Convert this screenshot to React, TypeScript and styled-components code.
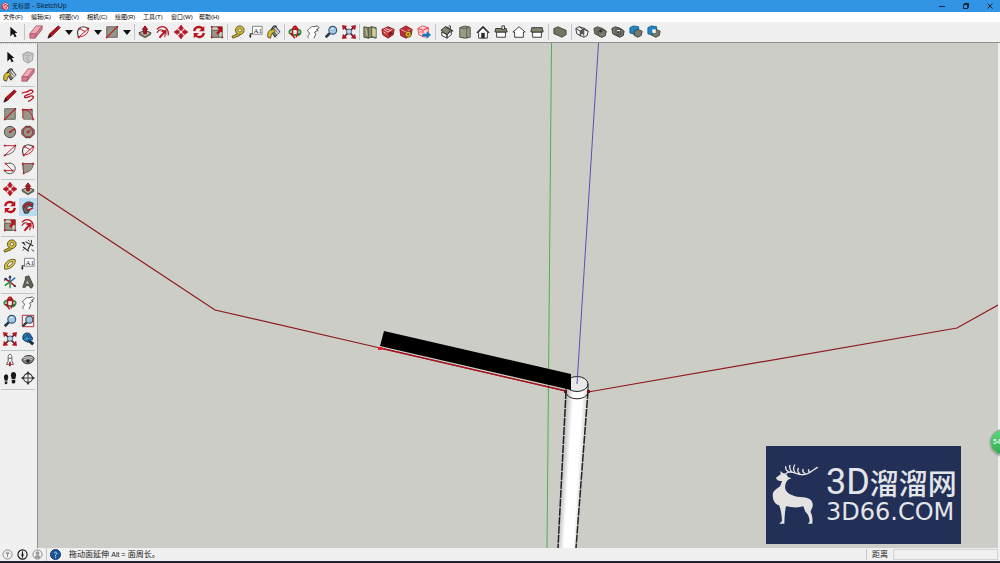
import React from "react";
import styled, { createGlobalStyle } from "styled-components";

const GlobalStyle = createGlobalStyle`
  * { box-sizing: border-box; }
  body { margin: 0; background: #f0f0f0; }
  button, input { font: inherit; color: inherit; margin: 0; padding: 0; border: 0; background: none; }
`;

const ui = `"Liberation Sans", "Noto Sans CJK SC", sans-serif`;

const Window = styled.div`
  display: flex;
  flex-direction: column;
  min-height: 100vh;
  overflow: hidden;
  font: 8px/10px ${ui};
  color: #222;
  background: #f0f0f0;
  border-bottom: 2px solid #20242a;
`;

const TitleBar = styled.header`
  display: flex;
  align-items: center;
  height: 12px;
  padding-left: 1px;
  gap: 3px;
  background: #3294e4;
  color: #0b2540;
`;

const Title = styled.h1`
  flex: 1;
  margin: 0;
  font: 400 6px/12px ${ui};
`;

const AppName = styled.span`
  font-size: 7px;
`;

const WindowButton = styled.button`
  width: 21px;
  height: 12px;
  display: grid;
  place-items: center;
`;

const MenuBar = styled.nav`
  display: flex;
  height: 10px;
  padding-left: 3px;
  background: #fff;
`;

const MenuButton = styled.button`
  width: 28px;
  text-align: left;
  white-space: nowrap;
  font-size: 6px;
  line-height: 10px;
  color: #000;
`;

const Toolbar = styled.div`
  display: flex;
  align-items: center;
  height: 21px;
  padding-left: 4px;
  border-bottom: 1px solid #8f8f8c;
`;

const Tool = styled.button<{ $active?: boolean }>`
  width: 18px;
  height: 18px;
  display: grid;
  place-items: center;
  background: ${(p) => (p.$active ? "#bcdcf4" : "transparent")};
`;

const Caret = styled.button`
  width: 11px;
  height: 18px;
  display: grid;
  place-items: center;
`;

const Divider = styled.i<{ $wide?: number }>`
  width: ${(p) => p.$wide ?? 3}px;
  height: 16px;
  display: flex;
  justify-content: center;
  &::after { content: ""; width: 1px; background: #c2c6c6; }
`;

const Workspace = styled.div`
  flex: 1;
  display: flex;
  min-height: 0;
`;

const SideBar = styled.aside`
  width: 38px;
  padding: 4px 0 0 1px;
  border-right: 1px solid #929290;
  border-top: 1px dotted #c8c8c8;
`;

const ToolGrid = styled.div`
  display: grid;
  grid-template-columns: 18px 18px;
  padding-bottom: 2px;
  border-bottom: 1px solid #c2c6c6;
  margin-right: 2px;
`;

const Viewport = styled.main`
  position: relative;
  flex: 1;
  display: flex;
  margin-right: 2px;
  background: #cdcdc8;
`;

const Scene = styled.svg`
  flex: 1;
  width: 100%;
  min-width: 0;
`;

const Watermark = styled.div`
  position: absolute;
  right: 37px;
  bottom: 4px;
  width: 195px;
  height: 98px;
  display: flex;
  align-items: center;
  padding-left: 6px;
  gap: 8px;
  color: #e4e5e8;
  background: #222f56;
`;

const Brand = styled.div`
  white-space: nowrap;
`;

const BrandName = styled.div`
  display: flex;
  align-items: center;
  height: 34px;
  font: 500 29px/34px "Noto Sans CJK SC", sans-serif;
`;

const BrandLatin = styled.span`
  font: 400 36px/34px Roboto, sans-serif;
`;

const BrandSite = styled.div`
  font: 400 24px/26px "DejaVu Sans", sans-serif;
`;

const FloatBadge = styled.div`
  position: absolute;
  right: -18px;
  top: 386px;
  width: 26px;
  height: 26px;
  padding-left: 2px;
  border-radius: 50%;
  border: 1px solid #7fa989;
  color: #fff;
  font: 400 7px/24px ${ui};
  background: linear-gradient(#62d67c, #2eae4f);
  box-shadow: 0 1px 2px #8a8a86;
`;

const StatusBar = styled.footer`
  display: flex;
  align-items: center;
  height: 13px;
`;

const StatusButton = styled.button`
  width: 15px;
  height: 12px;
  display: grid;
  place-items: center;
`;

const Message = styled.span`
  flex: 1;
  padding-left: 6px;
  white-space: nowrap;
  small { font-size: 7px; }
`;

const MeasureLabel = styled.label`
  display: flex;
  align-items: center;
  gap: 5px;
  padding: 0 2px 0 5px;
  border-left: 1px solid #c8c8c8;
  line-height: 6px;
`;

const Measure = styled.input`
  width: 105px;
  height: 11px;
  border: 1px solid #d0d3d8;
  background: #f0f0f0;
`;

const R = "#b8141f";
const T = "#98978a";
const K = "#2a2a2a";

const solid = (
  <>
    <path d="M1 4l4-2 3 1 3 1 4 3-1 5-4 2-4-2-4-2z" fill="#6e6f62" stroke="#44453c" />
    <path d="M6 7l4-2 5 2-1 5-4 2-4-2z" fill="#7b7c6f" stroke="#44453c" />
  </>
);

const glyphs: Record<string, React.ReactNode> = {
  select: <path d="M5 2v11l3-3 2 4 2-1-2-4h3z" fill="#111" />,
  component: (
    <>
      <path d="M2 5l5-3 7 2-1 8-5 3-5-3z" fill="#ccc" stroke="#999" />
      <path d="M2 5l6 2 6-3M8 7v8M5 4l5 2M5 9l5 3" stroke="#aaa" fill="none" />
    </>
  ),
  eraser: (
    <>
      <path d="M1 10L8 1h7l-7 9z" fill="#f3a9b5" stroke="#a9606e" />
      <path d="M1 10h7l-1 5H1zM8 10l7-9v4l-8 10z" fill="#d9788b" stroke="#a9606e" />
    </>
  ),
  paint: (
    <>
      <path d="M4 6l6-4 5 6-6 6z" fill="#777" stroke={K} />
      <path d="M7 5l6 6M9 3l5 6" stroke="#eee" strokeWidth="1.3" />
      <path d="M1 14c-1-6 2-9 5-9 3 1 4 3 1 4-2 0-2 3-3 6z" fill="#d8bd31" stroke="#4b4417" />
      <path d="M5 6c1-5 4-6 6-4" stroke={K} strokeWidth="1.4" fill="none" />
    </>
  ),
  pencil: (
    <>
      <path d="M1 15l2-5 10-9 2 2-10 10z" fill={R} stroke="#6b0c12" />
      <path d="M1 15l2-5 2 3z" fill="#222" />
    </>
  ),
  freehand: (
    <path d="M1 5c3-3 5 0 8-3 3-2 6 0 4 2-2 3-9 2-9 5 0 2 5 0 7-1 3-1 4 2 2 3-2 2-2 3-5 3" fill="none" stroke={R} strokeWidth="1.5" />
  ),
  rect: (
    <>
      <path d="M2 2h12v12H2z" fill={T} stroke="#5b5b50" />
      <path d="M3 13L13 3" stroke={R} strokeWidth="1.3" />
      <path d="M1 13h2v2H1zM13 1h2v2h-2z" fill={R} />
    </>
  ),
  rotrect: (
    <>
      <path d="M3 3h10v11H3z" fill={T} stroke="#77776b" />
      <path d="M2 13V3h9M3 3q9 1 11 11" stroke={R} fill="none" />
      <path d="M1 2h2v2H1zM11 2h2v2h-2zM13 13h2v2h-2z" fill={R} />
    </>
  ),
  circle: (
    <>
      <circle cx="8" cy="8" r="6.5" fill={T} stroke="#4a4a42" />
      <path d="M8 8l4-3" stroke={R} strokeWidth="1.4" />
      <path d="M7 7h2v2H7zM12 4h2v2h-2z" fill={R} />
    </>
  ),
  polygon: (
    <>
      <path d="M5 1.500h6l4 4v5l-4 4H5l-4-4v-5z" fill={T} stroke={K} />
      <circle cx="8" cy="8" r="5.500" fill="none" stroke={R} />
      <path d="M8 8l4-3M7 7h2v2H7z" stroke={R} />
    </>
  ),
  arc: (
    <>
      <path d="M14 3q1 9-12 11" fill="none" stroke="#555" />
      <path d="M2 14L14 3H2" fill="none" stroke={R} />
      <path d="M1 2h2v2H1zM13 2h2v2h-2zM1 13h2v2H1z" fill={R} />
    </>
  ),
  arc2: (
    <>
      <path d="M3 14C-1 5 6-1 14 4" fill="none" stroke="#444" strokeWidth="1.300" />
      <path d="M3 14L14 4M4 4l7 4M14 4q1 8-11 10" fill="none" stroke={R} />
      <path d="M2 13h2v2H2zM13 3h2v2h-2zM3 3h2v2H3z" fill={R} />
    </>
  ),
  arc3: (
    <>
      <path d="M4 3C12 0 17 8 12 13 8 16 2 14 2 10" fill="none" stroke="#444" />
      <path d="M3 3l8 8H2" fill="none" stroke={R} />
      <path d="M2 2h2v2H2zM10 10h2v2h-2zM1 10h2v2H1z" fill={R} />
    </>
  ),
  pie: (
    <>
      <path d="M2 3h12q0 9-11 11z" fill={T} stroke="#67675b" />
      <path d="M1 2h2v2H1zM13 2h2v2h-2zM2 13h2v2H2z" fill={R} />
      <path d="M3 14L2 3h12" fill="none" stroke={R} strokeWidth=".7" />
    </>
  ),
  push: (
    <>
      <path d="M1 9l7-3 7 3-7 5z" fill="#b5b39d" stroke={K} />
      <path d="M1 9v2l7 4 7-4V9l-7 4z" fill="#68685b" />
      <path d="M8 1l3 4H9.500v5h-3V5H5z" fill={R} stroke="#780c14" />
    </>
  ),
  offset: (
    <>
      <path d="M1 5C6-1 15 2 14 12" fill="none" stroke={R} strokeWidth="1.500" />
      <path d="M1 9c3-6 11-4 9 5" fill="none" stroke="#8d1d24" strokeWidth="1.200" />
      <path d="M3 14l5-6-3-1 7-2v6l-2-2-5 6z" fill={R} />
    </>
  ),
  follow: (
    <>
      <path d="M2 9C2 3 9 0 14 4l-1 4c-4-3-7 0-6 3l3 1-2 3H4z" fill="#69675b" stroke={K} />
      <path d="M4 9c0-4 5-6 9-3M6 11c5 1 6-2 8-2" fill="none" stroke={R} strokeWidth="1.600" />
    </>
  ),
  move: (
    <path d="M8 0l3 4H9.500v2h-3V4H5zM8 16l3-4H9.500v-2h-3v2H5zM0 8l4-3v1.500h2v3H4V11zM16 8l-4-3v1.500h-2v3h2V11z" fill={R} stroke={R} strokeWidth=".6" />
  ),
  rotate: (
    <>
      <path d="M2.500 7C3 2 9 1 12 4M13.500 9c-.5 5-6 6-9.500 3" fill="none" stroke={R} strokeWidth="2.600" />
      <path d="M14 1v6H8zM2 15V9h6z" fill={R} />
    </>
  ),
  scale: (
    <>
      <path d="M2 2h12v12H2z" fill="#d4d1bf" stroke="#4d4d43" />
      <path d="M2 6h8v8H2z" fill={T} stroke="#5c5c50" />
      <path d="M8 2h6v6h-2l-3 3-2-2 3-3z" fill={R} />
      <path d="M1 13h2v2H1zM13 13h2v2h-2zM1 1h2v2H1z" fill={R} />
    </>
  ),
  tape: (
    <>
      <circle cx="10" cy="6" r="5" fill="#d3bb3b" stroke="#564c18" />
      <circle cx="10" cy="6" r="2" fill="#f0eed9" stroke="#6f642b" />
      <path d="M7 10l-6 3 1 2 8-3" fill="#c7af31" stroke="#564c18" />
    </>
  ),
  dimension: (
    <>
      <path d="M2 9l7 5M5 3l9 5M2 4l3 3M8 12l4-8" stroke={K} strokeWidth="1.300" fill="none" />
      <path d="M1 4h3M12 1v3M8 1l2 2M2 13l3-3M12 12l3 2" stroke={K} />
    </>
  ),
  protractor: (
    <>
      <path d="M2 14C0 7 7 1 14 3c1 5-4 11-12 11z" fill="#d8c64a" stroke="#5f581f" />
      <path d="M5 11c0-4 3-6 6-6 0 3-3 6-6 6z" fill="#f0f0f0" stroke="#706724" />
    </>
  ),
  text: (
    <>
      <path d="M4 1.500h11v9H4z" fill="#fff" stroke="#777" />
      <path d="M4 10H1.500v3" fill="none" stroke={K} strokeWidth="1.300" />
      <path d="M0 12h3l-1.500 3z" fill={K} />
      <text x="5" y="9" fontSize="8" fontFamily="Liberation Serif, serif" fill="#222">A1</text>
    </>
  ),
  axes: (
    <>
      <path d="M8 8V1M8 8l6-5" stroke="#2d6fbc" strokeWidth="1.800" />
      <path d="M8 8L2 4M8 8l6 5" stroke={R} strokeWidth="1.800" />
      <path d="M8 8v7M8 8l-6 4" stroke="#2e9b43" strokeWidth="1.800" />
      <path d="M6 3l2-3 2 3zM1 7l1-4 3 1zM12 13l3 1-1-3z" fill="#235" />
    </>
  ),
  text3d: (
    <>
      <path d="M5 2l4-1 5 11-2 3-2-1-1-2H6l-1 2H2l3-9z" fill="#616158" stroke="#45453d" />
      <path d="M7 6l2 4H6z" fill="#c9c9bd" />
    </>
  ),
  orbit: (
    <>
      <ellipse cx="8" cy="8" rx="6.500" ry="3.500" fill="none" stroke="#2a9143" strokeWidth="2.200" />
      <path d="M8 1C4 3 4 13 8 15M8 1c4 2 4 10 1 13" fill="none" stroke={R} strokeWidth="1.800" />
      <path d="M5 5l4-4 2 5zM2 9l3 4 1-4z" fill={R} />
      <path d="M11 9l4 1-3 3z" fill="#217537" />
    </>
  ),
  hand: (
    <path d="M3 15c-2-2 0-3 1-5 0-3-3-2-2-4 3-3 5-5 7-4l4-1 2 2-3 2 2 1-4 2 1 3-2 4" fill="#fff" stroke="#444" />
  ),
  zoom: (
    <>
      <path d="M7 9l-5 5" stroke="#263849" strokeWidth="3" />
      <circle cx="10" cy="6" r="4.500" fill="#9fc7e3" stroke="#36556c" strokeWidth="1.300" />
      <path d="M8 5q1-2 3-1" stroke="#fff" fill="none" />
    </>
  ),
  zoomwin: (
    <>
      <path d="M1.500 1.500h13v13h-13z" fill="none" stroke={R} />
      <path d="M7 9l-5 5" stroke="#263849" strokeWidth="2.600" />
      <circle cx="9.500" cy="6.500" r="4" fill="#9fc7e3" stroke="#36556c" strokeWidth="1.300" />
    </>
  ),
  extents: (
    <>
      <path d="M0 0l6 1-5 5zM16 0l-6 1 5 5zM0 16l6-1-5-5zM16 16l-6-1 5-5z" fill={R} />
      <path d="M3 3l10 10M13 3L3 13" stroke="#6b1b25" strokeWidth="1.800" />
      <circle cx="8" cy="7.500" r="3" fill="#b9d5e8" stroke="#37566c" />
    </>
  ),
  previous: (
    <>
      <path d="M8 9l6 5" stroke="#182f46" strokeWidth="3.500" />
      <circle cx="7" cy="6" r="4.800" fill="#2e78b5" stroke="#173f65" strokeWidth="1.300" />
      <path d="M13 9H8v3L2 8l6-5v3h5z" fill="#3089cd" stroke="#183d5d" />
    </>
  ),
  camera: (
    <>
      <path d="M8 1c3 2 2 6 2 8l2 4H4l2-4c0-3-1-6 2-8z" fill="#fff" stroke="#444" />
      <path d="M7 10h2v5H7z" fill={R} />
      <path d="M6 6h4" stroke="#444" />
    </>
  ),
  look: (
    <>
      <path d="M1 8c2-6 11-7 14-2-1 7-11 9-14 2z" fill="#7d7d79" stroke={K} />
      <path d="M2 6c4-2 9-2 12 0M3 8c3-2 7-2 10 0" fill="none" stroke="#ddd" />
      <circle cx="8" cy="9" r="2" fill="#222" />
    </>
  ),
  walk: (
    <path d="M1 7c0-4 5-5 5 0l-1 4H2zM2 12h3v2c-1 2-3 1-3 0zM9 5c0-5 6-5 6 0l-1 4h-4zM10 10h4v3c-1 2-4 1-4 0z" fill="#181818" />
  ),
  section: (
    <>
      <circle cx="8" cy="8" r="5" fill="none" stroke={K} strokeWidth="1.200" />
      <path d="M8 3v10M3 8h10" stroke={K} />
      <path d="M8 0l2 3H6zM8 16l2-3H6zM0 8l3-2v4zM16 8l-3-2v4z" fill={K} />
    </>
  ),
  map: (
    <>
      <path d="M1 2l5 1 4-1 5 1v12l-5-1-4 1-5-1z" fill="#87916b" stroke="#434a32" />
      <path d="M6 3v12M10 2v12" stroke="#42472f" />
      <path d="M11 4l3 1v8l-3-1zM3 4l2 8" fill="#cfc991" stroke="#d5d0a0" />
    </>
  ),
  warehouse: (
    <>
      <path d="M1 5l7-3 7 3-1 6-6 4-6-4z" fill="#c9343a" stroke="#751b20" />
      <path d="M3 5l5 3 5-3M5 4l6 2M3 8l3 2" fill="none" stroke="#f6dcdc" />
      <path d="M9 9l4-2v3l-4 3z" fill="#721a1e" />
    </>
  ),
  extension: (
    <>
      <path d="M1 5l7-4 7 4-1 6-6 4-6-3z" fill="#c52a30" stroke="#751b20" />
      <path d="M2 5l6 3 5-3" fill="none" stroke="#f3b7b7" />
      <circle cx="10.500" cy="10.500" r="3.500" fill="#dfb530" stroke="#554616" />
      <circle cx="10.500" cy="10.500" r="1.200" fill="#554616" />
    </>
  ),
  share: (
    <>
      <path d="M1 4l5-3 7 2v9l-5 2-6-3z" fill="#fad5d5" stroke="#e83f48" />
      <path d="M1 4l6 2 6-3M3 8h5" fill="none" stroke="#e83f48" strokeWidth="1.300" />
      <path d="M6 10h5V7l5 4-5 5v-3H6z" fill="#1c75bb" />
    </>
  ),
  iso: (
    <>
      <path d="M2 8l6 3v4l-6-3zM8 11l5-4v4l-5 4z" fill="#f7f7f0" stroke={K} />
      <path d="M1 6l5-4 4 1 5 4-3-1-4 5z" fill="#85866f" stroke={K} />
      <path d="M6 2l6 4M10 1h2v3" fill="none" stroke={K} />
    </>
  ),
  top: (
    <>
      <path d="M2 3q5-3 11-1l1 1v11q-6 2-12 0z" fill="#9a9a84" stroke="#4a4a40" />
      <path d="M10 3v12M2 3q4 2 11 0" stroke="#55554a" />
    </>
  ),
  front: (
    <>
      <path d="M3 8v7h10V8L8 3z" fill="#fff" stroke={K} />
      <path d="M1 9l7-7 7 7" fill="none" stroke={K} strokeWidth="1.500" />
      <path d="M6 9h4v6H6z" fill={K} />
    </>
  ),
  right: (
    <>
      <path d="M3 8h10v6H3z" fill="#fff" stroke={K} />
      <path d="M2 4h12l1 4H1z" fill="#85856f" stroke={K} />
      <path d="M9 1h3v4H9z" fill="#eee" stroke={K} />
    </>
  ),
  back: <path d="M1 8l7-6 7 6h-2v6H3V8z" fill="#fff" stroke={K} />,
  left: (
    <>
      <path d="M3 8h10v6H3z" fill="#fff" stroke={K} />
      <path d="M2 3h12l1 5H1z" fill="#85856f" stroke={K} />
    </>
  ),
  shell: <path d="M1 4l5-2 4 2 5 2v5l-5 3-4-2-5-2z" fill="#74755f" stroke="#44453c" />,
  intersect: (
    <>
      <path d="M1 4l4-2 6 2 4 3-1 5-4 2-8-4z" fill="#f4f4f4" stroke={K} />
      <path d="M1 4l5 3 5-3M6 7v6M6 7l4-2 5 2M5 2l5 4v7" fill="none" stroke={K} />
      <path d="M6 7l4-1v4l-4 1z" fill="#55564c" />
    </>
  ),
  union: (
    <>
      {solid}
      <path d="M7 7h4M9 5v4" stroke="#222" />
    </>
  ),
  subtract: (
    <>
      <path d="M1 4l4-2 6 2 4 3-1 5-4 2-8-4z" fill="#77786b" stroke={K} />
      <path d="M6 5h5v6H6z" fill="#fff" stroke={K} />
      <path d="M7 7h3v3H7z" fill="#333" />
    </>
  ),
  trim: (
    <>
      <path d="M1 3l4-2 6 1v6l-4 3-6-2z" fill="#2086c6" stroke="#185d88" />
      <path d="M6 7l4-2 5 2-1 5-4 2-4-2z" fill="#77786b" stroke="#3e3f37" />
    </>
  ),
  split: (
    <>
      <path d="M1 3l4-2 6 1v7l-4 3-6-2z" fill="#2086c6" stroke="#185d88" />
      <path d="M6 7l4-2 5 2-1 5-4 2-4-2z" fill="#77786b" stroke="#3e3f37" />
      <path d="M6 5h4v4H6z" fill="#f4f8fa" />
    </>
  ),
};

function Glyph({ name, size = 14 }: { name: string; size?: number }) {
  return (
    <svg width={size} height={size} viewBox="0 0 16 16" fill="none" aria-hidden="true">
      {glyphs[name]}
    </svg>
  );
}

// "v" places a drop-down caret; a number places a divider of that width.
const topTools: (string | number)[] = [
  "select", 5, "eraser", "pencil", "v", "arc2", "v", "rect", "v", 4,
  "push", "offset", "move", "rotate", "scale", 3,
  "tape", "text", "paint", 3,
  "orbit", "hand", "zoom", "extents", 3,
  "map", "warehouse", "extension", "share", 5,
  "iso", "top", "front", "right", "back", "left", 5,
  "shell", 4, "intersect", "union", "subtract", "trim", "split",
];

const sideTools = [
  ["select", "component", "paint", "eraser"],
  ["pencil", "freehand", "rect", "rotrect", "circle", "polygon", "arc", "arc2", "arc3", "pie"],
  ["move", "push", "rotate", "follow", "scale", "offset"],
  ["tape", "dimension", "protractor", "text", "axes", "text3d"],
  ["orbit", "hand", "zoom", "zoomwin", "extents", "previous"],
  ["camera", "look", "walk", "section"],
];

const menus = ["文件(F)", "编辑(E)", "视图(V)", "相机(C)", "绘图(R)", "工具(T)", "窗口(W)", "帮助(H)"];

function Model() {
  return (
    <Scene viewBox="38 43 960 505" preserveAspectRatio="xMidYMid slice" role="img" aria-label="模型">
      <defs>
        <linearGradient id="tube" gradientUnits="userSpaceOnUse" x1="566" y1="392" x2="588" y2="393.400">
          <stop offset="0" stopColor="#b4b4b4" />
          <stop offset=".35" stopColor="#fff" />
          <stop offset=".75" stopColor="#fff" />
          <stop offset="1" stopColor="#cfcfcf" />
        </linearGradient>
      </defs>
      <path d="M551.500 43L547 548" stroke="#47b34b" />
      <g fill="none" stroke="#8c1a1e" strokeWidth="1.200">
        <path d="M38 193L215 310L380 348L566 391" />
        <path d="M588 392L957 328L998 305" />
      </g>
      <path d="M380 348L566 391" stroke="#a5141f" strokeWidth="1.300" />
      <path d="M566 384L566 392L558 548H576L588 392V384z" fill="url(#tube)" />
      <path d="M566 391L558 548M588 391L576 548" stroke="#222" strokeWidth="1.500" strokeDasharray="8 1" />
      <ellipse cx="577" cy="384" rx="11" ry="7.500" fill="#e8e8e8" stroke="#222" />
      <path d="M566 384v8c1 9 21 9 22 0v-8" fill="none" stroke="#222" />
      <path d="M598.500 43L577 384" stroke="#5552b5" />
      <path d="M384 331L571 374V390L380 346z" fill="#000" />
      <path d="M378 347h4v3h-4z" fill="#e8202b" />
      <path d="M564 390h3v3h-3zM587 390h3v3h-3z" fill="#701016" />
    </Scene>
  );
}

function Deer() {
  return (
    <svg width="46" height="62" viewBox="36 113 138 186" aria-hidden="true">
      <path
        d="M48 154L62 144L61 134L70 141C76 139 82 146 84 152L94 156L84 160C76 168 74 180 76 188C80 200 94 208 112 211C136 212 156 214 158 232C160 244 152 248 152 258C158 270 158 280 157 292H144L149 285C148 272 145 264 136 256L130 240C112 246 92 242 78 240C74 256 74 274 73 292H58L66 284C65 268 64 252 57 237C42 232 36 216 39 200C42 190 54 186 61 178L66 164C58 164 50 162 48 154Z"
        fill="#e4e3e1"
      />
      <path
        d="M78 142C88 130 106 142 124 145C148 147 156 132 172 123M88 137Q76 132 77 121M97 138Q86 128 90 117M107 141Q96 128 104 116M120 143Q110 136 115 126M137 143Q126 138 129 129M151 138Q144 135 146 130"
        fill="none"
        stroke="#e4e3e1"
        strokeWidth="4"
        strokeLinecap="round"
      />
    </svg>
  );
}

export default function App() {
  return (
    <Window>
      <GlobalStyle />
      <TitleBar>
        <svg width="8" height="9" viewBox="0 0 16 18" aria-hidden="true">
          <path d="M1 5l7-4 7 4v8l-7 4-7-4z" fill="#d92832" />
          <path d="M4 5l5-2 4 2-5 3 5 2v3l-5 2M4 5v3l4 2v3l-4-2" fill="none" stroke="#fff" strokeWidth="1.500" />
        </svg>
        <Title>无标题<AppName> - SketchUp</AppName></Title>
        <WindowButton aria-label="最小化">
          <svg width="6" height="6" viewBox="0 0 6 6"><path d="M0 3.500h6" stroke="#123" /></svg>
        </WindowButton>
        <WindowButton aria-label="还原">
          <svg width="6" height="6" viewBox="0 0 6 6" fill="none"><path d="M.5 1.500h4v4h-4zM1.500 1V.5h4v4H5" stroke="#123" /></svg>
        </WindowButton>
        <WindowButton aria-label="关闭">
          <svg width="6" height="6" viewBox="0 0 6 6"><path d="M.5.5l5 5M5.500.5l-5 5" stroke="#123" /></svg>
        </WindowButton>
      </TitleBar>
      <MenuBar>
        {menus.map((m) => <MenuButton key={m}>{m}</MenuButton>)}
      </MenuBar>
      <Toolbar>
        {topTools.map((t, i) =>
          typeof t === "number" ? (
            <Divider key={i} $wide={t} />
          ) : t === "v" ? (
            <Caret key={i} aria-label="more">
              <svg width="8" height="5" viewBox="0 0 8 5"><path d="M0 0h8L4 5z" fill="#111" /></svg>
            </Caret>
          ) : (
            <Tool key={i} aria-label={t}><Glyph name={t} /></Tool>
          )
        )}
      </Toolbar>
      <Workspace>
        <SideBar>
          {sideTools.map((group, i) => (
            <ToolGrid key={i}>
              {group.map((t) => (
                <Tool key={t} aria-label={t} $active={t === "follow"}><Glyph name={t} /></Tool>
              ))}
            </ToolGrid>
          ))}
        </SideBar>
        <Viewport>
          <Model />
          <Watermark>
            <Deer />
            <Brand>
              <BrandName><BrandLatin>3D</BrandLatin>溜溜网</BrandName>
              <BrandSite>3D66.COM</BrandSite>
            </Brand>
          </Watermark>
          <FloatBadge>54</FloatBadge>
        </Viewport>
      </Workspace>
      <StatusBar>
        <StatusButton aria-label="地理位置">
          <svg width="11" height="11" viewBox="0 0 12 12" fill="none"><circle cx="6" cy="6" r="5" stroke="#888" /><path d="M6 9V5M4.500 5a1.500 1.500 0 1 1 3 0z" stroke="#888" /></svg>
        </StatusButton>
        <StatusButton aria-label="版权">
          <svg width="11" height="11" viewBox="0 0 12 12" fill="none"><circle cx="6" cy="6" r="5" stroke="#111" strokeWidth="1.200" /><path d="M6 2.500v7M5.500 5h1v3h-1z" stroke="#111" /></svg>
        </StatusButton>
        <StatusButton aria-label="登录">
          <svg width="11" height="11" viewBox="0 0 12 12"><circle cx="6" cy="6" r="5" fill="none" stroke="#888" /><circle cx="6" cy="4.500" r="2" fill="#999" /><path d="M2.500 9q3.500-5 7 0-3.500 3-7 0z" fill="#999" /></svg>
        </StatusButton>
        <Divider />
        <StatusButton aria-label="帮助">
          <svg width="11" height="11" viewBox="0 0 12 12"><circle cx="6" cy="6" r="5.500" fill="#1d5796" stroke="#123760" /><path d="M4.500 4.500q1.500-2 3 0 0 1-1.500 2V8M6 9v1" fill="none" stroke="#cfe2f4" /></svg>
        </StatusButton>
        <Message>拖动面延伸 <small>Alt =</small> 面周长。</Message>
        <MeasureLabel>
          距离
          <Measure type="text" />
        </MeasureLabel>
      </StatusBar>
    </Window>
  );
}
